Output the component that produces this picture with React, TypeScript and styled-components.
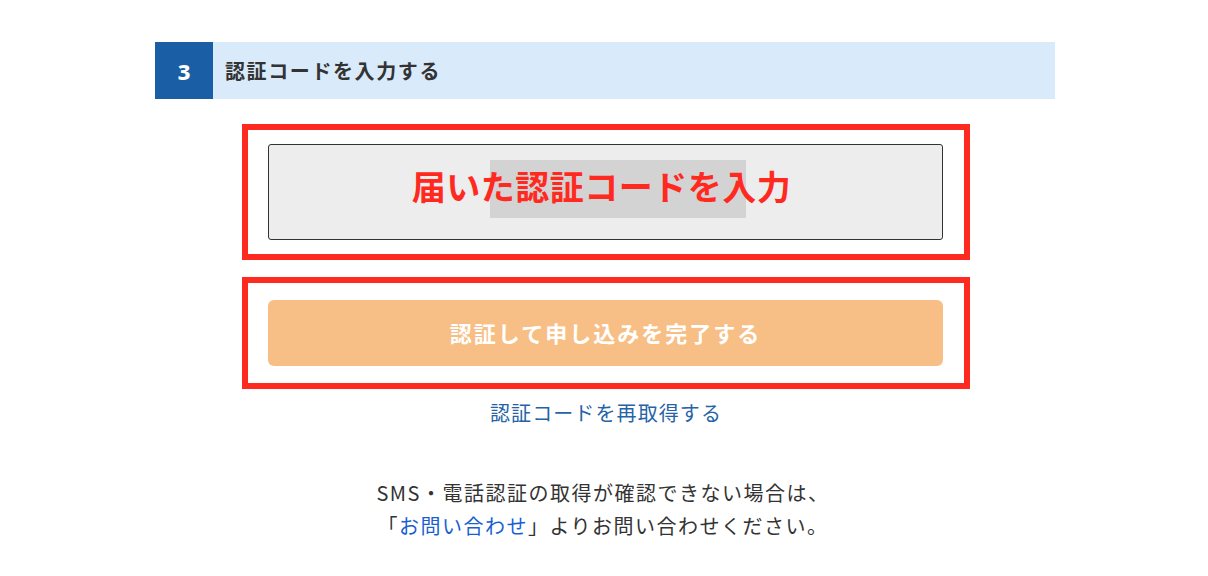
import React from 'react';
import styled, { createGlobalStyle } from 'styled-components';

const GlobalStyle = createGlobalStyle`
  body {
    margin: 0;
    background: #fff;
    font-family: "Noto Sans CJK JP", "Noto Sans", sans-serif;
    color: #333;
  }
`;

const Page = styled.div`
  width: 900px;
  margin-left: calc(50% - 449px);
  padding-top: 42px;
`;

const StepHeader = styled.div`
  display: flex;
  height: 57px;
  background-color: #d9eafb;
`;

const StepNumber = styled.div`
  width: 58px;
  display: flex;
  align-items: center;
  justify-content: center;
  background-color: #1a5fa6;
  color: #fff;
  font-family: "Noto Sans", sans-serif;
  font-size: 22px;
  font-weight: 800;
`;

const StepTitle = styled.h2`
  margin: 0;
  padding-left: 12px;
  display: flex;
  align-items: center;
  font-size: 20px;
  font-weight: bold;
  letter-spacing: 1.6px;
  color: #333;
`;

const Body = styled.div`
  width: 728px;
  margin: 25px 0 0 87px;
  display: flex;
  flex-direction: column;
  align-items: center;
`;

const Frame = styled.div<{ $pad: number; $gap?: number }>`
  box-sizing: border-box;
  width: 100%;
  margin-top: ${(p) => p.$gap || 0}px;
  border: 6px solid #ff2a1f;
  padding: ${(p) => p.$pad}px 21px ${(p) => p.$pad}px 20px;
`;

const CodeInput = styled.div`
  position: relative;
  box-sizing: border-box;
  height: 96px;
  padding: 0 8px 14px 0;
  border: 1px solid #333;
  border-radius: 3px;
  background-color: #ededed;
  display: flex;
  align-items: center;
  justify-content: center;
`;

const Selection = styled.span`
  position: absolute;
  left: 221px;
  top: 15px;
  width: 256px;
  height: 58px;
  background-color: #d3d3d3;
`;

const Placeholder = styled.span`
  position: relative;
  color: #ff2a1f;
  font-size: 34px;
  font-weight: bold;
  letter-spacing: 0.5px;
`;

const SubmitButton = styled.button`
  display: flex;
  align-items: center;
  justify-content: center;
  width: 100%;
  height: 66px;
  padding: 0 0 3px;
  border: none;
  border-radius: 6px;
  background-color: #f7bf85;
  color: #fff;
  font-family: inherit;
  font-size: 22px;
  font-weight: bold;
  letter-spacing: 2px;
`;

const ResendLink = styled.a`
  margin-top: 9px;
  line-height: 30px;
  font-size: 20px;
  letter-spacing: 1.1px;
  color: #2563a6;
  text-decoration: none;
`;

const Notice = styled.p`
  margin: 48px 0 0;
  padding-right: 6px;
  text-align: center;
  font-size: 20px;
  line-height: 33px;
  letter-spacing: 1.5px;
  color: #333;
`;

const ContactLink = styled.a`
  color: #1a5fd0;
  text-decoration: none;
`;

const App: React.FC = () => {
  return (
    <>
      <GlobalStyle />
      <Page>
        <StepHeader>
          <StepNumber>3</StepNumber>
          <StepTitle>認証コードを入力する</StepTitle>
        </StepHeader>
        <Body>
          <Frame $pad={14}>
            <CodeInput>
              <Selection />
              <Placeholder>届いた認証コードを入力</Placeholder>
            </CodeInput>
          </Frame>
          <Frame $pad={17} $gap={17}>
            <SubmitButton>認証して申し込みを完了する</SubmitButton>
          </Frame>
          <ResendLink href="#">認証コードを再取得する</ResendLink>
          <Notice>
            SMS・電話認証の取得が確認できない場合は、
            <br />「<ContactLink href="#">お問い合わせ</ContactLink>」よりお問い合わせください。
          </Notice>
        </Body>
      </Page>
    </>
  );
};

export default App;
